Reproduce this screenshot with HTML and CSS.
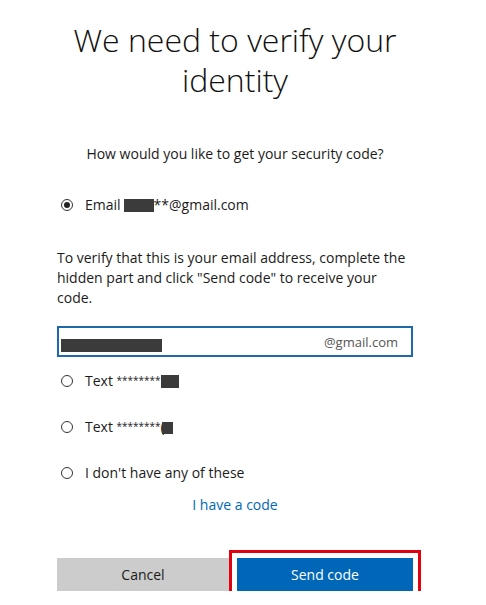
FILE: index.html
```html
<!DOCTYPE html>
<html>
<head>
<meta charset="utf-8">
<link rel="stylesheet" href="styles.css">
</head>
<body>
<main class="panel">
  <h1 class="title">We need to verify your identity</h1>
  <p class="question">How would you like to get your security code?</p>

  <div class="option option-email">
    <span class="radio checked"></span>
    <span class="label">Email<span class="redact r-email"></span>**@gmail.com</span>
  </div>

  <p class="explain">To verify that this is your email address, complete the hidden part and click "Send code" to receive your code.</p>

  <div class="input">
    <span class="redact r-input"></span>
    <span class="suffix">@gmail.com</span>
  </div>

  <div class="option">
    <span class="radio"></span>
    <span class="label">Text <span class="stars">********</span><span class="redact r-t1"></span></span>
  </div>
  <div class="option">
    <span class="radio"></span>
    <span class="label">Text <span class="stars">********</span>(<span class="redact r-t2"></span></span>
  </div>
  <div class="option">
    <span class="radio"></span>
    <span class="label">I don't have any of these</span>
  </div>

  <a class="link" href="#">I have a code</a>

  <div class="buttons">
    <button class="btn cancel">Cancel</button>
    <div class="focus-ring"><button class="btn send">Send code</button></div>
  </div>
</main>
</body>
</html>
```

FILE: styles.css
```css
html, body {
  margin: 0;
  padding: 0;
  background: #ffffff;
}
body {
  font-family: "Open Sans", "Noto Sans", sans-serif;
  color: #1b1b1b;
  font-size: 14px;
}
.panel {
  width: 356px;
  margin-left: 57px;
  padding-top: 20px;
  display: flex;
  flex-direction: column;
}
.title {
  margin: 0;
  font-weight: 300;
  font-size: 32px;
  line-height: 40px;
  text-align: center;
  color: #111;
  padding: 0 14px;
}
.question {
  margin: 0;
  margin-top: 44px;
  text-align: center;
  line-height: 20px;
}
.option {
  display: flex;
  align-items: center;
  gap: 12px;
  padding-left: 4px;
  height: 20px;
}
.option-email {
  margin-top: 31px;
}
.radio {
  width: 12px;
  height: 12px;
  box-sizing: border-box;
  border: 1px solid #333;
  border-radius: 50%;
  flex: none;
  position: relative;
}
.radio.checked::after {
  content: "";
  position: absolute;
  left: 2px;
  top: 2px;
  width: 6px;
  height: 6px;
  border-radius: 50%;
  background: #222;
}
.label {
  line-height: 20px;
  white-space: nowrap;
}
.redact {
  display: inline-block;
  background: #3b3b3b;
  vertical-align: -2px;
}
.r-email {
  width: 30px;
  height: 13px;
  margin-left: 3px;
}
.r-t1 {
  width: 18px;
  height: 13px;
}
.r-t2 {
  width: 11px;
  height: 12px;
  margin-left: -3px;
}
.stars {
  font-size: 10px;
  position: relative;
  top: -2px;
}
.explain {
  margin: 0;
  margin-top: 33px;
  line-height: 20px;
}
.input {
  margin-top: 18px;
  height: 31px;
  box-sizing: border-box;
  border: 2px solid #1e69ab;
  display: flex;
  align-items: center;
  justify-content: space-between;
  padding: 0 13px 0 2px;
}
.r-input {
  width: 101px;
  height: 13px;
  margin-top: 7px;
}
.suffix {
  color: #555;
  font-size: 13px;
}
.input + .option {
  margin-top: 14px;
}
.option + .option {
  margin-top: 26px;
}
.link {
  align-self: center;
  margin-top: 12px;
  color: #0067b8;
  text-decoration: none;
  line-height: 20px;
}
.buttons {
  display: flex;
  align-items: center;
  gap: 8px;
  margin-top: 43px;
}
.btn {
  border: 0;
  font-family: inherit;
  font-size: 14px;
  height: 33px;
  padding: 0;
  cursor: pointer;
}
.cancel {
  width: 172px;
  background: #cccccc;
  color: #1b1b1b;
}
.focus-ring {
  outline: 3px solid #e3000f;
  outline-offset: 5px;
}
.send {
  width: 176px;
  background: #0067b8;
  color: #ffffff;
  display: block;
}
```
